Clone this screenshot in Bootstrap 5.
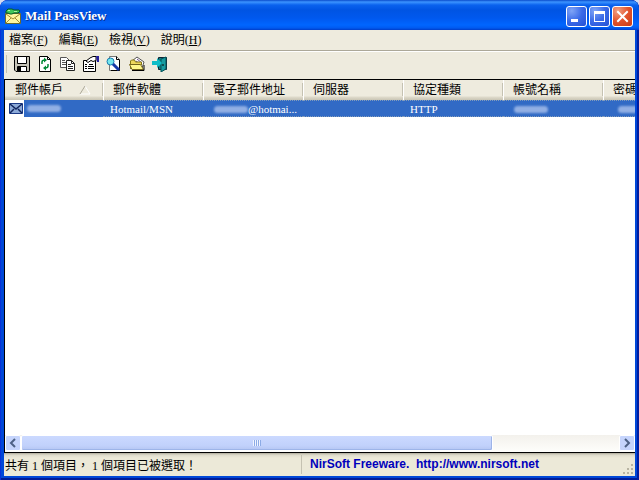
<!DOCTYPE html>
<html lang="zh-Hant">
<head>
<meta charset="utf-8">
<meta name="viewport" content="width=device-width, initial-scale=1">
<title>Mail PassView</title>
<link href="https://cdn.jsdelivr.net/npm/bootstrap@5.3.0/dist/css/bootstrap.min.css" rel="stylesheet">
<style>
body{font:12px/16px "Liberation Serif","Noto Sans CJK TC",serif;color:#000;background:#d5dcf0}
button{color:inherit;font:inherit}
.app-window{background:#0048d8;border-radius:8px 8px 0 0;padding:0 4px 4px;box-shadow:inset 1px 0 #0831d9,inset -2px 0 #001ea0,inset 0 -2px #001c98}
.title-bar{height:30px;margin:0 -4px;padding:2px 6px 0 5px;border-radius:8px 8px 0 0;background:linear-gradient(#0a4ccc 0,#3c94ff 2px,#0a62ee 5px,#0054e3 10px,#0058ee 18px,#0066ff 25px,#005af0 28px,#003dc8 30px)}
.title-bar h1{font-size:13px;line-height:16px;font-weight:bold;color:#fff;text-shadow:1px 1px #0a2f90}
.caption-group{gap:2px}
.caption-btn{width:21px;height:21px;padding:0;border:1px solid #fff;border-radius:3px;background:radial-gradient(circle at 25% 20%,#7fa4f6,#3a6ae8 50%,#2450d4)}
.caption-btn svg,.tool-btn svg{display:block}
.caption-close{background:radial-gradient(circle at 25% 20%,#f0a184,#e2532c 50%,#c93c16)}
.client{background:#ece9d8}
.menu-bar{height:21px;border-bottom:1px solid #aca899;background:#eeebde;gap:1px}
.menu-btn{border:0;background:none;padding:0 5px;line-height:20px}
.tool-bar{height:28px;border-top:1px solid #fff;padding:0 0 4px 2px;background:#eeebde}
.grip{width:1px;height:18px;background:#c5c2b2;margin-right:3px}
.tool-btn{border:0;background:none;padding:0;width:23px;height:23px}
.tool-btn svg{margin:0 auto}
.list-pane{background:#fff;border:solid #000;border-width:1px 0 1px 1px}
.mail-list{table-layout:fixed;width:900px;border-collapse:separate;border-spacing:0;white-space:nowrap}
.mail-list th{height:20px;padding:0 0 0 10px;font-weight:normal;background:linear-gradient(#eeebde 16px,#dedacb 17px,#c9c5b4);position:relative}
.mail-list th+th{box-shadow:inset 1px 0 #fff}
.mail-list th:not(:last-child)::after{content:"";position:absolute;right:0;top:3px;height:13px;width:1px;background:#c5c2b2}
.mail-list td{height:17px;font-size:11px;line-height:14px;padding:0 0 0 7px;background:#316ac5;color:#fff;border:dotted #829cbc;border-width:1px 0}
.mail-list td:first-child{padding-left:4px;background:linear-gradient(90deg,#fff 19px,#316ac5 19px);border-color:transparent}
.c-first{width:98px}.c-next{width:100px}
.redacted{display:inline-block;width:34px;height:7px;border-radius:4px;background:#91afe4;filter:blur(1px);vertical-align:middle}
.scroll-bar{height:17px;background:linear-gradient(#f3f1ec,#fefefb)}
.scroll-btn{width:16px;height:16px;border:1px solid #fff;border-radius:2px;background:#c5d4fc;padding:0}
.scroll-btn svg{display:block;margin:auto}
.scroll-thumb{width:79%;height:16px;border:1px solid #fff;border-radius:2px;background:linear-gradient(#cbd9ff,#c1d1fb 70%,#b4c5f2);box-shadow:inset -1px -1px #9db4e8}
.thumb-grip{width:8px;height:6px;background:repeating-linear-gradient(90deg,#f0f4ff 0 1px,#8cabe6 1px 2px)}
.status-bar{height:23px;background:linear-gradient(#aca899 0,#dedbcb 2px,#ece9d8 5px)}
.status-msg{width:298px;padding:3px 0 0 1px;border-right:1px solid #c5c2b2;margin:2px 0}
.status-link{font:bold 12px/16px "Liberation Sans",Arial,sans-serif;color:#0000bc;padding:3px 0 0 8px;white-space:pre}
.size-grip{width:12px;height:12px}
</style>
<script src="https://cdn.jsdelivr.net/npm/bootstrap@5.3.0/dist/js/bootstrap.bundle.min.js"></script>
</head>
<body>
<div class="app-window d-flex flex-column vh-100 overflow-hidden">
<header class="title-bar d-flex align-items-center flex-shrink-0">
<svg class="me-1" width="16" height="16" viewBox="0 0 16 16" aria-hidden="true"><path d="M.5 5.500h15v10H.5z" fill="#fff6a0" stroke="#6b6a30"/><path d="M1 6l7 5 7-5M1 15l5-5M15 15l-5-5" fill="none" stroke="#a08b35"/><path d="M1 5V3l2-2h4l2 1h5l1 1-2 2H9L7 6H5L3 5z" fill="#3fc75a" stroke="#075d24"/><path d="M3 2.500h2M9 3.500h3" stroke="#a9f0a1"/></svg>
<h1 class="mb-0 me-auto">Mail PassView</h1>
<div class="caption-group d-flex">
<button class="caption-btn" aria-label="最小化"><svg width="19" height="19"><path d="M4 12h7v3H4z" fill="#fff"/></svg></button>
<button class="caption-btn" aria-label="最大化"><svg width="19" height="19"><path d="M4 4h11v11H4zM5 7v7h9V7z" fill="#fff" fill-rule="evenodd"/></svg></button>
<button class="caption-btn caption-close" aria-label="關閉"><svg width="19" height="19"><path d="M5 5l9 9M14 5l-9 9" stroke="#fff" stroke-width="2" stroke-linecap="square"/></svg></button>
</div>
</header>
<main class="client d-flex flex-column flex-grow-1 overflow-hidden">
<nav class="menu-bar d-flex flex-shrink-0">
<button class="menu-btn">檔案(<u>F</u>)</button><button class="menu-btn">編輯(<u>E</u>)</button><button class="menu-btn">檢視(<u>V</u>)</button><button class="menu-btn">說明(<u>H</u>)</button>
</nav>
<div class="tool-bar d-flex align-items-center flex-shrink-0">
<span class="grip"></span>
<button class="tool-btn" aria-label="儲存"><svg width="16" height="16" viewBox="0 0 16 16"><path d="M.5.5h15v15H2l-1.500-1.500z" fill="#c7c5b9" stroke="#000"/><path d="M3.500.5h9v7h-9z" fill="#fff" stroke="#000"/><path d="M3.500 10.500h9v5h-9z" fill="#fff" stroke="#000"/><path d="M4 11h3v4H4z"/></svg></button>
<button class="tool-btn" aria-label="重新整理"><svg width="16" height="16" viewBox="0 0 16 16"><path d="M2.500.5h8l3 3v12h-11z" fill="#fff" stroke="#000"/><path d="M10.500.5v3h3" fill="none" stroke="#000"/><path d="M5 8V6q0-2 3-2M11 8v2q0 2-3 2" fill="none" stroke="#008a35" stroke-width="1.500"/><path d="M7 1.500l3 2.500-3 2.500zM9 9.500L6 12l3 2.500z" fill="#008a35"/></svg></button>
<button class="tool-btn" aria-label="複製"><svg width="16" height="16" viewBox="0 0 16 16"><path d="M.5 1.500h6l3 3v7h-9z" fill="#fff" stroke="#555"/><path d="M2 4.500h3M2 6.500h4M2 8.500h4" stroke="#555"/><path d="M6.500 4.500h5l3 3v7h-8z" fill="#fff" stroke="#222"/><path d="M11.500 4.500v3h3M8 8.500h3M8 10.500h5M8 12.500h5" fill="none" stroke="#222"/></svg></button>
<button class="tool-btn" aria-label="內容"><svg width="16" height="16" viewBox="0 0 16 16"><path d="M.5 4.500h12v11H.5z" fill="#fff" stroke="#000"/><path d="M2 8.500h2M2 10.500h2M5 10.500h6M2 12.500h2M5 12.500h6M6 8.500h4" stroke="#000"/><path d="M3 5l4-3 3-1.500h3v4l-3 1-2-1-3 2z" fill="#fff" stroke="#000"/><path d="M13 0h3v6h-2z" fill="#25209c"/></svg></button>
<button class="tool-btn" aria-label="尋找"><svg width="16" height="16" viewBox="0 0 16 16"><path d="M3.500.5h7l3 3v11h-10z" fill="#fff" stroke="#777"/><path d="M13.500 4v10.500H5M10.500.5v3h3" fill="none" stroke="#000"/><circle cx="4.500" cy="5.500" r="3.500" fill="#75e6ed" stroke="#167bb0"/><path d="M7 8l6 6" stroke="#1639a8" stroke-width="3"/></svg></button>
<button class="tool-btn" aria-label="開啟資料夾"><svg width="16" height="16" viewBox="0 0 16 16"><path d="M3 5l5-4 7 5-2 6H4z" fill="#fff" stroke="#555"/><path d="M8 3l5 4M7 5l4 3" stroke="#6c4e8e"/><path d="M1.500 13V5l1-1h3l1 2h6v3" fill="#eed85d" stroke="#857716"/><path d="M.5 8.500h11l3 5H3z" fill="#fff78b" stroke="#74651b"/><path d="M3 14.500h12V9" fill="none" stroke="#000"/></svg></button>
<button class="tool-btn" aria-label="結束"><svg width="16" height="16" viewBox="0 0 16 16"><path d="M6.500 1.500h8v12h-8z" fill="#087d82" stroke="#123"/><path d="M9 3l5-2v12l-5 3z" fill="#179ba0" stroke="#045157"/><path d="M0 5h5V2l5 5-5 5V9H0z" fill="#10bdc7"/><path d="M10 9h2" stroke="#000"/></svg></button>
</div>
<section class="list-pane d-flex flex-column flex-grow-1 overflow-hidden">
<div class="flex-grow-1 overflow-hidden">
<table class="mail-list">
<colgroup><col class="c-first"><col class="c-next"><col class="c-next"><col class="c-next"><col class="c-next"><col class="c-next"><col></colgroup>
<thead><tr><th><span class="d-flex align-items-center">郵件帳戶<svg class="ms-3" width="12" height="10"><path d="M1 9h10L6 1" fill="none" stroke="#fff"/><path d="M1 9l5-8" stroke="#aca899"/></svg></span></th><th>郵件軟體</th><th>電子郵件地址</th><th>伺服器</th><th>協定種類</th><th>帳號名稱</th><th>密碼</th></tr></thead>
<tbody><tr><td><span class="d-flex align-items-center"><svg width="14" height="11" viewBox="0 0 14 11"><path d="M.5.5h13v10H.5z" fill="#8ba9d8" stroke="#1b3a86"/><path d="M1 1l6 5 6-5M1 10l4-4M13 10L9 6" fill="none" stroke="#10245e" stroke-width="1.500"/></svg><i class="redacted ms-1"></i></span></td><td>Hotmail/MSN</td><td><i class="redacted ms-1"></i>@hotmai...</td><td></td><td>HTTP</td><td><i class="redacted ms-1"></i></td><td><i class="redacted ms-2"></i></td></tr></tbody>
</table>
</div>
<div class="scroll-bar d-flex flex-shrink-0">
<button class="scroll-btn flex-shrink-0" aria-label="向左捲動"><svg width="8" height="10"><path d="M6 1L2 5l4 4" fill="none" stroke="#4d6185" stroke-width="2"/></svg></button>
<div class="flex-grow-1"><div class="scroll-thumb d-flex align-items-center justify-content-center"><span class="thumb-grip"></span></div></div>
<button class="scroll-btn flex-shrink-0" aria-label="向右捲動"><svg width="8" height="10"><path d="M2 1l4 4-4 4" fill="none" stroke="#4d6185" stroke-width="2"/></svg></button>
</div>
</section>
<footer class="status-bar d-flex flex-shrink-0">
<div class="status-msg">共有 1 個項目， 1 個項目已被選取！</div>
<a class="status-link text-decoration-none me-auto" href="http://www.nirsoft.net">NirSoft Freeware.  http://www.nirsoft.net</a>
<svg class="size-grip align-self-end" viewBox="0 0 12 12" aria-hidden="true"><path d="M8 0h2v2H8zM4 4h2v2H4zM8 4h2v2H8zM0 8h2v2H0zM4 8h2v2H4zM8 8h2v2H8z" fill="#b8b4a2"/></svg>
</footer>
</main>
</div>
</body>
</html>
